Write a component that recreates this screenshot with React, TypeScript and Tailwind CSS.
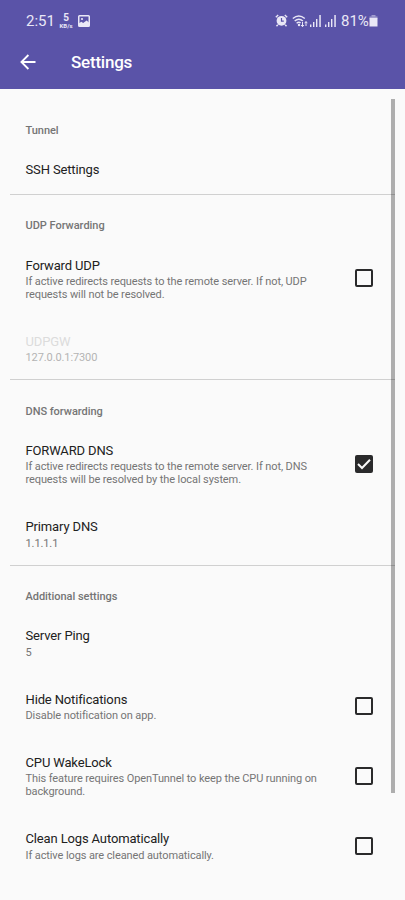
import { useState } from "react";

type Item = {
  title: string;
  summary?: string;
  checkbox?: boolean;
  checked?: boolean;
  disabled?: boolean;
};

type Section = {
  title: string;
  items: Item[];
};

const sections: Section[] = [
  { title: "Tunnel", items: [{ title: "SSH Settings" }] },
  {
    title: "UDP Forwarding",
    items: [
      {
        title: "Forward UDP",
        summary:
          "If active redirects requests to the remote server. If not, UDP requests will not be resolved.",
        checkbox: true,
      },
      { title: "UDPGW", summary: "127.0.0.1:7300", disabled: true },
    ],
  },
  {
    title: "DNS forwarding",
    items: [
      {
        title: "FORWARD DNS",
        summary:
          "If active redirects requests to the remote server. If not, DNS requests will be resolved by the local system.",
        checkbox: true,
        checked: true,
      },
      { title: "Primary DNS", summary: "1.1.1.1" },
    ],
  },
  {
    title: "Additional settings",
    items: [
      { title: "Server Ping", summary: "5" },
      {
        title: "Hide Notifications",
        summary: "Disable notification on app.",
        checkbox: true,
      },
      {
        title: "CPU WakeLock",
        summary:
          "This feature requires OpenTunnel to keep the CPU running on background.",
        checkbox: true,
      },
      {
        title: "Clean Logs Automatically",
        summary: "If active logs are cleaned automatically.",
        checkbox: true,
      },
    ],
  },
];

function StatusBar() {
  return (
    <div className="flex h-[41px] items-center pl-[26px] pr-[27px] text-[#e9e7f6]">
      <span className="w-[33px] pt-px text-[15px] leading-none">2:51</span>
      <div className="flex w-[14px] flex-col items-center font-bold">
        <span className="text-[10px] leading-[10px]">5</span>
        <span className="text-[6px] leading-[6px]">KB/s</span>
      </div>
      <svg className="ml-[5px]" width="12" height="12" viewBox="0 0 12 12">
        <rect x="0.75" y="0.75" width="10.5" height="10.5" rx="0.8" fill="none" stroke="currentColor" strokeWidth="1.5" />
        <circle cx="4" cy="4" r="1.1" fill="currentColor" />
        <path d="M1 8.2 3.3 6.8 5.2 8 8.6 5.4 11 7.4V11H1z" fill="currentColor" />
      </svg>

      <div className="ml-auto flex items-center">
        <svg width="13" height="13" viewBox="0 0 13 13" fill="none" stroke="currentColor">
          <circle cx="6.5" cy="6.8" r="4.9" fill="currentColor" stroke="none" />
          <path d="M0.8 3.2 3.2 1M12.2 3.2 9.8 1M2.8 10.8 1.5 12.3M10.2 10.8l1.3 1.5" strokeWidth="1.4" />
          <path d="M6.5 4v3.2h2.3" stroke="#5a53a8" strokeWidth="1.2" />
        </svg>
        <svg className="ml-[4px]" width="16" height="14" viewBox="0 0 16 14" fill="none" stroke="currentColor">
          <path d="M0.8 4.6Q6.8-0.8 12.8 4.6M2.7 7Q6.8 3.4 10.9 7M4.6 9.2Q6.8 7.4 8.6 9" strokeWidth="1.4" />
          <circle cx="7" cy="11" r="1.2" fill="currentColor" stroke="none" />
          <path d="M10.5 8v4.5M9 11l1.5 1.7L12 11M14 12V7.6M12.7 9.2 14 7.6l1.3 1.6" strokeWidth="1" />
        </svg>
        <svg className="ml-[2px]" width="11" height="12" viewBox="0 0 11 12" fill="currentColor">
          <path d="M0 9.5h1.4V12H0zM3 7h1.4v5H3zM6 4h1.4v8H6zM9.3 0h1.5v12H9.3z" />
        </svg>
        <svg className="ml-[4px]" width="11" height="12" viewBox="0 0 11 12" fill="currentColor">
          <path d="M0 9.5h1.4V12H0zM3 7h1.4v5H3zM6 4h1.4v8H6zM9.3 0h1.5v12H9.3z" />
        </svg>
        <span className="ml-[5px] w-[28px] pt-px text-[15px] leading-none">81%</span>
        <svg width="9" height="12" viewBox="0 0 9 12" fill="currentColor">
          <path d="M2.5 0h4v1.5h-4z" opacity="0.5" />
          <path d="M0.5 1.5h8v2h-8z" opacity="0.5" />
          <path d="M0.5 3h8v8.5h-8z" />
        </svg>
      </div>
    </div>
  );
}

function AppBar() {
  return (
    <div className="flex h-[48px] items-start pl-[19px] pt-[12px] text-white">
      <svg width="18" height="18" viewBox="0 0 18 18" fill="none" stroke="currentColor" strokeWidth="1.8">
        <path d="M16.5 9H2.4M9.4 2 2.4 9l7 7" />
      </svg>
      <h1 className="ml-[34px] text-[17px] font-medium leading-[19px] tracking-[-0.22px]">
        Settings
      </h1>
    </div>
  );
}

function Checkbox({ checked }: { checked: boolean }) {
  return (
    <svg className="shrink-0" width="18" height="18" viewBox="0 0 18 18" fill="none">
      {checked ? (
        <>
          <rect width="18" height="18" rx="2" fill="#2a2a2b" />
          <path d="m3 9 4 4 8-8.3" stroke="#fafafa" strokeWidth="2" />
        </>
      ) : (
        <rect x="1" y="1" width="16" height="16" rx="1" stroke="#2a2a2b" strokeWidth="2" />
      )}
    </svg>
  );
}

function Preference({ item }: { item: Item }) {
  const [checked, setChecked] = useState(Boolean(item.checked));

  return (
    <div
      className="flex items-center justify-between py-[15.5px] pl-[25.5px] pr-[32px]"
      onClick={() => setChecked(!checked)}
    >
      <div className="w-[300px]">
        <div className={`text-[13px] leading-[19.3px] tracking-[-0.14px] ${item.disabled ? "text-[#dcdcdc]" : "text-[#212121]"}`}>
          {item.title}
        </div>
        {item.summary && (
          <div className={`text-[11px] leading-[13px] tracking-[-0.1px] ${item.disabled ? "text-[#b4b4b4]" : "text-[#757575]"}`}>
            {item.summary}
          </div>
        )}
      </div>
      {item.checkbox && <Checkbox checked={checked} />}
    </div>
  );
}

export default function App() {
  return (
    <div className="relative h-[900px] w-[405px] overflow-hidden bg-[#fafafa] font-['Roboto',sans-serif]">
      <header className="h-[89px] bg-[#5a53a8]">
        <StatusBar />
        <AppBar />
      </header>
      <main className="pt-[10px]">
        {sections.map((section, i) => (
          <section key={section.title} className="first:-mb-[1.2px]">
            {i > 0 && <hr className="-mb-[0.5px] -mt-[0.5px] ml-[10px] mr-[10px] border-[#d0d0d0]" />}
            <h2 className="h-[45.8px] pl-[25.5px] pt-[25px] text-[11px] font-medium leading-[13px] tracking-[-0.03px] text-[#757575]">
              {section.title}
            </h2>
            {section.items.map((item) => (
              <Preference key={item.title} item={item} />
            ))}
          </section>
        ))}
      </main>
      <div className="absolute left-[391px] top-[99px] h-[694px] w-[4px] bg-black/30" />
    </div>
  );
}
